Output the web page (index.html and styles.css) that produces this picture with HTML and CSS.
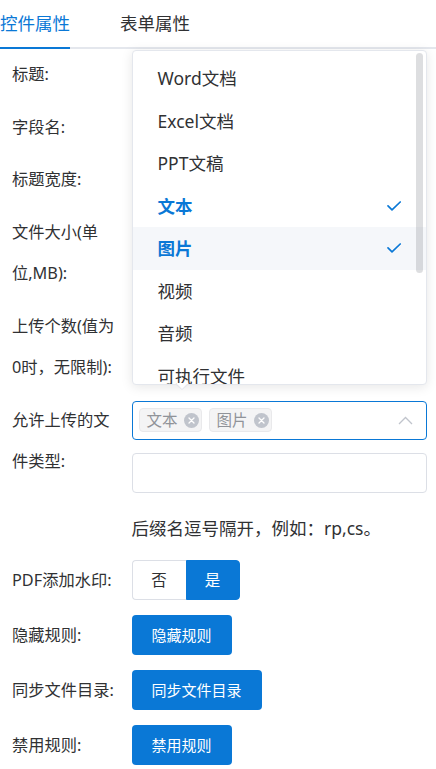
FILE: index.html
```html
<!DOCTYPE html>
<html lang="zh-CN">
<head>
<meta charset="utf-8">
<title>控件属性</title>
<link rel="stylesheet" href="styles.css">
</head>
<body>
<div class="tabs">
  <div class="tab active">控件属性</div>
  <div class="tab">表单属性</div>
</div>

<div class="form">
  <div class="item"><div class="label">标题:</div><div class="content"></div></div>
  <div class="item"><div class="label">字段名:</div><div class="content"></div></div>
  <div class="item"><div class="label">标题宽度:</div><div class="content"></div></div>
  <div class="item"><div class="label">文件大小(单位,MB):</div><div class="content"></div></div>
  <div class="item"><div class="label">上传个数(值为0时，无限制):</div><div class="content"></div></div>

  <div class="item item-types">
    <div class="label">允许上传的文件类型:</div>
    <div class="content">
      <div class="select">
        <div class="dropdown">
          <div class="panel">
            <ul class="options">
              <li class="option">Word文档</li>
              <li class="option">Excel文档</li>
              <li class="option">PPT文稿</li>
              <li class="option selected">文本
                <svg class="check" width="14" height="10" viewBox="0 0 14 10"><polyline points="1,4.8 5,8.8 13.2,1" fill="none" stroke="#0a78d6" stroke-width="1.7" stroke-linejoin="round" stroke-linecap="round"/></svg>
              </li>
              <li class="option selected hover">图片
                <svg class="check" width="14" height="10" viewBox="0 0 14 10"><polyline points="1,4.8 5,8.8 13.2,1" fill="none" stroke="#0a78d6" stroke-width="1.7" stroke-linejoin="round" stroke-linecap="round"/></svg>
              </li>
              <li class="option">视频</li>
              <li class="option">音频</li>
              <li class="option">可执行文件</li>
            </ul>
            <div class="thumb"></div>
          </div>
          <div class="arrow"></div>
        </div>
        <div class="tags">
          <span class="tag">文本<svg class="tag-close" width="15" height="15" viewBox="0 0 15 15"><circle cx="7.5" cy="7.5" r="7.5" fill="#c0c4cc"/><path d="M5 5L10 10M10 5L5 10" stroke="#fff" stroke-width="1.3" stroke-linecap="round"/></svg></span>
          <span class="tag">图片<svg class="tag-close" width="15" height="15" viewBox="0 0 15 15"><circle cx="7.5" cy="7.5" r="7.5" fill="#c0c4cc"/><path d="M5 5L10 10M10 5L5 10" stroke="#fff" stroke-width="1.3" stroke-linecap="round"/></svg></span>
        </div>
        <svg class="chevron" width="15" height="9" viewBox="0 0 15 9"><polyline points="1,8 7.5,1.5 14,8" fill="none" stroke="#c0c4cc" stroke-width="1.3"/></svg>
      </div>
      <div class="input"></div>
      <div class="hint">后缀名逗号隔开，例如：rp,cs。</div>
    </div>
  </div>

  <div class="item item-btn">
    <div class="label">PDF添加水印:</div>
    <div class="content">
      <div class="radio-group">
        <span class="radio">否</span><span class="radio on">是</span>
      </div>
    </div>
  </div>
  <div class="item item-btn">
    <div class="label">隐藏规则:</div>
    <div class="content"><span class="btn">隐藏规则</span></div>
  </div>
  <div class="item item-btn">
    <div class="label">同步文件目录:</div>
    <div class="content"><span class="btn">同步文件目录</span></div>
  </div>
  <div class="item item-btn">
    <div class="label">禁用规则:</div>
    <div class="content"><span class="btn">禁用规则</span></div>
  </div>
</div>
</body>
</html>
```

FILE: styles.css
```css
* { box-sizing: border-box; }
html, body {
  margin: 0;
  padding: 0;
  background: #fff;
  font-family: "Noto Sans", "Noto Sans CJK SC", sans-serif;
  color: #303133;
  overflow: hidden;
}

.tabs {
  display: flex;
  gap: 50px;
  border-bottom: 2px solid #e4e7ed;
  height: 49px;
}
.tab {
  height: 49px;
  line-height: 47px;
  font-size: 17.5px;
  padding: 0;
  border-bottom: 2px solid transparent;
  color: #303133;
}
.tab.active {
  color: #0a78d6;
  border-bottom-color: #0a78d6;
}

.form {
  padding: 5px 9.5px 0 12px;
}
.item {
  display: flex;
  align-items: flex-start;
  margin-bottom: 11px;
}
.label {
  width: 119.5px;
  flex: none;
  padding-right: 11.5px;
  font-size: 16.25px;
  line-height: 41.5px;
  color: #303133;
}
.content {
  flex: 1;
  min-width: 0;
  min-height: 41.5px;
}

.item-types { margin-bottom: 12px; }
.item-btn { margin-bottom: 15px; }
.item-btn .label { line-height: 40px; }
.item-btn .content { min-height: 40px; }

.select {
  position: relative;
  height: 39px;
  border: 1px solid #0a78d6;
  border-radius: 4px;
  display: flex;
  align-items: center;
  padding: 0 13px 0 6px;
  margin-top: 1px;
}
.tags {
  flex: 1;
  display: flex;
  gap: 7px;
}
.tag {
  display: inline-flex;
  align-items: center;
  height: 24px;
  padding: 0 2px 0 7px;
  background: #f4f4f5;
  border: 1px solid #e9e9eb;
  border-radius: 4px;
  color: #909399;
  font-size: 15.5px;
  line-height: 22px;
}
.tag-close { margin-left: 6px; display: block; }
.chevron { display: block; }

.input {
  height: 40px;
  margin-top: 13px;
  border: 1px solid #dcdfe6;
  border-radius: 4px;
}
.hint {
  margin-top: 15px;
  height: 40px;
  line-height: 40px;
  font-size: 17.5px;
  color: #303133;
}

.dropdown {
  position: absolute;
  left: -1px;
  right: -1px;
  bottom: calc(100% + 17px);
  z-index: 10;
}
.panel {
  position: relative;
  height: 335px;
  background: #fff;
  border: 1px solid #e4e7ed;
  border-radius: 4px;
  box-shadow: 0 2px 12px 0 rgba(0, 0, 0, 0.1);
  overflow: hidden;
}
.options {
  list-style: none;
  margin: 0;
  padding: 6.5px 0;
}
.option {
  height: 42.5px;
  line-height: 42.5px;
  padding: 0 25px;
  font-size: 17.5px;
  color: #303133;
  display: flex;
  align-items: center;
  justify-content: space-between;
  white-space: nowrap;
}
.option.selected {
  color: #0a78d6;
  font-weight: 700;
}
.option.hover { background: #f5f7fa; }
.check { display: block; margin-right: 0; }
.thumb {
  position: absolute;
  top: 2px;
  right: 2.5px;
  width: 7.5px;
  height: 220px;
  border-radius: 4px;
  background: rgba(144, 147, 153, 0.3);
}
.arrow {
  position: absolute;
  left: 43px;
  top: 100%;
  width: 0;
  height: 0;
  border-left: 7px solid transparent;
  border-right: 7px solid transparent;
  border-top: 6px solid #e4e7ed;
  margin-top: -1px;
}
.arrow::after {
  content: "";
  position: absolute;
  left: -6px;
  top: -7px;
  border-left: 6px solid transparent;
  border-right: 6px solid transparent;
  border-top: 6px solid #fff;
}

.radio-group {
  display: inline-flex;
  height: 40px;
}
.radio {
  width: 54px;
  height: 40px;
  line-height: 38px;
  text-align: center;
  font-size: 15.5px;
  border: 1px solid #dcdfe6;
  color: #303133;
  background: #fff;
}
.radio:first-child {
  border-radius: 4px 0 0 4px;
  border-right: none;
}
.radio.on {
  border-radius: 0 4px 4px 0;
  background: #0a78d6;
  border-color: #0a78d6;
  color: #fff;
}
.btn {
  display: inline-block;
  height: 40px;
  line-height: 40px;
  padding: 0 20px;
  font-size: 15px;
  color: #fff;
  background: #0a78d6;
  border-radius: 4px;
}
```
